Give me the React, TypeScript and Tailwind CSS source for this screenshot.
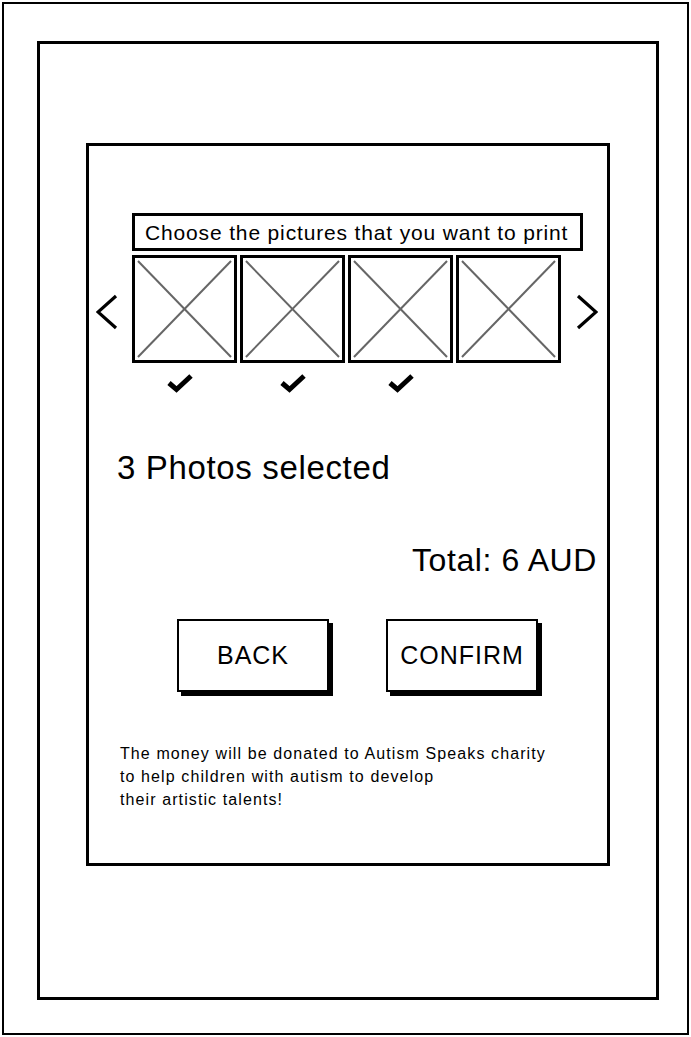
import React from 'react';

const font = { fontFamily: '"Liberation Sans", Arial, sans-serif' };

const PhotoBox: React.FC = () => (
  <div className="relative w-[105px] h-[108px] border-[3px] border-black bg-white">
    <svg className="absolute inset-0 w-full h-full" viewBox="0 0 100 100" preserveAspectRatio="none">
      <line x1="3" y1="3" x2="97" y2="97" stroke="#666" strokeWidth="2" vectorEffect="non-scaling-stroke" />
      <line x1="97" y1="3" x2="3" y2="97" stroke="#666" strokeWidth="2" vectorEffect="non-scaling-stroke" />
    </svg>
  </div>
);

const Check: React.FC = () => (
  <svg width="28" height="21" viewBox="0 0 28 21">
    <path d="M3 11 L10.5 17.5 L25 4" fill="none" stroke="#000" strokeWidth="5" strokeLinejoin="miter" />
  </svg>
);

const Arrow: React.FC<{ dir: 'left' | 'right' }> = ({ dir }) => (
  <svg width="22" height="36" viewBox="0 0 22 36">
    {dir === 'left' ? (
      <polyline points="20,2 2,18 20,34" fill="none" stroke="#000" strokeWidth="3.2" />
    ) : (
      <polyline points="2,2 20,18 2,34" fill="none" stroke="#000" strokeWidth="3.2" />
    )}
  </svg>
);

const SketchButton: React.FC<{ label: string }> = ({ label }) => (
  <button className="w-[152px] h-[73px] border-2 border-black bg-white shadow-[4px_4px_0_#000] flex items-center justify-center text-[25px] tracking-[1px] text-black">
    {label}
  </button>
);

const App: React.FC = () => {
  return (
    <div className="w-[691px] h-[1037px] bg-white p-[2px] text-black" style={font}>
      <div className="h-[1033px] w-[687px] border-2 border-black pl-[33px] pt-[37px]">
        {/* device frame */}
        <div className="w-[622px] h-[959px] border-[3px] border-black pl-[46px] pt-[99px]">
          {/* dialog */}
          <div className="w-[524px] h-[723px] border-[3px] border-black flex flex-col">
            <div className="mt-[67px] ml-[43px] w-[451px] h-[38px] border-[3px] border-black flex items-center pl-[10px] text-[21px] tracking-[0.85px] leading-none whitespace-nowrap">
              Choose the pictures that you want to print
            </div>

            <div className="mt-[4px] flex items-center">
              <div className="ml-[7px] mt-[5px] w-[22px] h-[36px]">
                <Arrow dir="left" />
              </div>
              <div className="ml-[14px] flex gap-[3px]">
                <PhotoBox />
                <PhotoBox />
                <PhotoBox />
                <PhotoBox />
              </div>
              <div className="ml-[15px] mt-[5px] w-[22px] h-[36px]">
                <Arrow dir="right" />
              </div>
            </div>

            <div className="mt-[9px] ml-[43px] flex gap-[3px] h-[21px]">
              <div className="w-[105px] flex justify-center pr-[10px]"><Check /></div>
              <div className="w-[105px] flex justify-center"><Check /></div>
              <div className="w-[105px] flex justify-center"><Check /></div>
            </div>

            <div className="mt-[59px] ml-[28px] text-[33px] tracking-[0.65px] leading-[32px]">3 Photos selected</div>

            <div className="mt-[60px] mr-[10px] self-end text-[32px] tracking-[0.6px] leading-[32px]">Total: 6 AUD</div>

            <div className="mt-[43px] ml-[88px] flex gap-[57px]">
              <SketchButton label="BACK" />
              <SketchButton label="CONFIRM" />
            </div>

            <div className="mt-[50px] ml-[31px] text-[16px] tracking-[1.1px] leading-[23px] whitespace-nowrap">
              <p>The money will be donated to Autism Speaks charity</p>
              <p>to help children with autism to develop</p>
              <p>their artistic talents!</p>
            </div>
          </div>
        </div>
      </div>
    </div>
  );
};

export default App;
